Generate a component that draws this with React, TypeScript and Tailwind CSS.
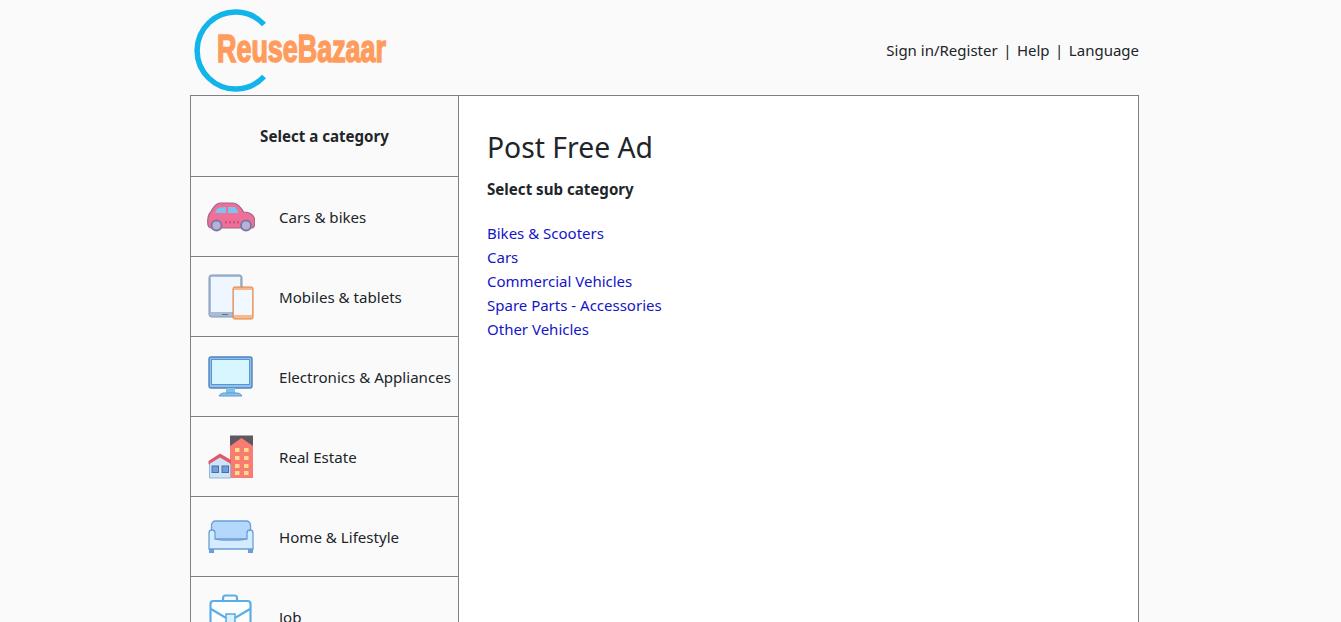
import { ReactNode } from 'react';

const CarIcon = () => (
  <svg width="48" height="30" viewBox="0 0 48 30">
    <path d="M0.700 20c0-5 1-8 3-10 3-6 6-9 10-9h12c4 0 8 4 11 9 6 0 11 3 11 9v3c0 3-2 4-4 4H4c-2 0-3.300-2-3.300-6z" fill="#f06f97" stroke="#a0678f" strokeWidth="1.200" />
    <path d="M8 11c1-3 2-5 5-5.500l6-.5v6z" fill="#7cc4f0" />
    <path d="M21 5h6c2 0 3.500 3 4.500 6H21z" fill="#7cc4f0" />
    <circle cx="9.500" cy="23.500" r="5" fill="#b6b3d6" stroke="#7d76a8" strokeWidth="2" />
    <circle cx="39" cy="23.500" r="5" fill="#b6b3d6" stroke="#7d76a8" strokeWidth="2" />
    <path d="M19 19v2.500M23 19v2.500M27 19v2.500M31 19v2.500" stroke="#a8476f" strokeWidth="1.200" />
  </svg>
);

const TabletIcon = () => (
  <svg width="46" height="46" viewBox="0 0 46 46">
    <rect x="1" y="1" width="33" height="42" rx="2.500" fill="#a9bcd6" stroke="#8197b5" />
    <rect x="3" y="3" width="29" height="35" fill="#eef7ff" />
    <path d="M14 40.500h6" stroke="#5f7390" strokeWidth="1" />
    <rect x="25" y="13" width="20" height="32" rx="1.500" fill="#fbb98a" stroke="#d9824d" />
    <rect x="26" y="16" width="18" height="25" fill="#f1f8ff" />
  </svg>
);

const MonitorIcon = () => (
  <svg width="46" height="41" viewBox="0 0 46 41">
    <rect x="1" y="1" width="43" height="31" rx="2" fill="#8fc0ee" stroke="#4f82bd" strokeWidth="1.400" />
    <rect x="3.500" y="3.500" width="38" height="25" fill="#d8f6ff" stroke="#5b95d1" />
    <rect x="18" y="32" width="9" height="5" fill="#7ec3e8" />
    <path d="M11 40c1-2 3-3 5-3h13c2 0 4 1 5 3z" fill="#8cc3ec" stroke="#5b95d1" />
  </svg>
);

const BuildingIcon = () => (
  <svg width="46" height="44" viewBox="0 0 46 44">
    <rect x="22" y="0.500" width="23" height="42.500" fill="#5f5860" />
    <path d="M22 11l11.500-8L45 11v32H22z" fill="#f97c72" />
    <g fill="#fddc8c">
      <rect x="27" y="13" width="4.500" height="4" /><rect x="36" y="13" width="4.500" height="4" />
      <rect x="27" y="21" width="4.500" height="4" /><rect x="36" y="21" width="4.500" height="4" />
      <rect x="27" y="29" width="4.500" height="4" /><rect x="36" y="29" width="4.500" height="4" />
      <rect x="27" y="36" width="4.500" height="4" /><rect x="36" y="36" width="4.500" height="4" />
    </g>
    <path d="M1.500 27l11-6 10 6v16h-21z" fill="#cfe3f8" stroke="#8fb3da" />
    <path d="M0.500 26l11.500-7.500L23 25v4l-11-6.500-11.500 7z" fill="#dd5b68" />
    <rect x="4" y="31" width="6.500" height="6.500" fill="#6c9fdb" stroke="#4a6f9f" />
    <rect x="14" y="31" width="6.500" height="6.500" fill="#6c9fdb" stroke="#4a6f9f" />
  </svg>
);

const SofaIcon = () => (
  <svg width="46" height="34" viewBox="0 0 46 34">
    <path d="M3.500 12V5c0-2 2-4 4-4h31c2 0 4 2 4 4v7l-2 7H6z" fill="#b4d8fb" stroke="#6a9fd6" strokeWidth="1.300" />
    <path d="M1 13c0-2 1.500-3 3-3s3 1 3 3v6c10 1.500 22 1.500 32 0v-6c0-2 1.500-3 3-3s3 1 3 3v16H1z" fill="#d5ebfe" stroke="#6a9fd6" strokeWidth="1.300" />
    <rect x="1" y="29" width="5" height="4" fill="#6a9fd6" />
    <rect x="40" y="29" width="5" height="4" fill="#6a9fd6" />
  </svg>
);

const JobIcon = () => (
  <svg width="46" height="46" viewBox="0 0 46 46">
    <path d="M15 8V4c0-1.500 1-2.500 2.500-2.500h9C28 1.500 29 2.500 29 4v4" fill="none" stroke="#5aaee8" strokeWidth="2.200" />
    <rect x="2.500" y="7" width="40" height="33" rx="3" fill="#fdfeff" stroke="#5aaee8" strokeWidth="2.200" />
    <path d="M3 15l15 9h9l15-9" fill="none" stroke="#5aaee8" strokeWidth="2.200" />
    <rect x="18" y="20" width="9" height="12" fill="#dff0fc" stroke="#5aaee8" strokeWidth="1.600" />
  </svg>
);

const CATEGORIES: { label: string; icon: ReactNode }[] = [
  { label: 'Cars & bikes', icon: <CarIcon /> },
  { label: 'Mobiles & tablets', icon: <TabletIcon /> },
  { label: 'Electronics & Appliances', icon: <MonitorIcon /> },
  { label: 'Real Estate', icon: <BuildingIcon /> },
  { label: 'Home & Lifestyle', icon: <SofaIcon /> },
  { label: 'Job', icon: <JobIcon /> },
];

const SUB_CATEGORIES = ['Bikes & Scooters', 'Cars', 'Commercial Vehicles', 'Spare Parts - Accessories', 'Other Vehicles'];

const Logo = () => (
  <div className="relative h-[83px] w-[200px]">
    <svg width="84" height="83" viewBox="0 0 84 83" className="absolute left-0 top-0">
      <path d="M74 15.500A38.500 38.500 0 1 0 74 67.500" fill="none" stroke="#12b5ea" strokeWidth="5.500" />
    </svg>
    <span className="absolute left-[27px] top-[17px] origin-left scale-x-[0.69] whitespace-nowrap font-['Liberation_Sans',sans-serif] text-[39px] leading-[46px] font-bold text-[#ff9c5d] [-webkit-text-stroke:1.600px_#ff9c5d]">
      ReuseBazaar
    </span>
  </div>
);

export default function App() {
  return (
    <div className="h-[622px] overflow-hidden bg-[#fafafa] font-['Noto_Sans',sans-serif] text-[15.1px] text-[#212529]">
      <div className="ml-[190px] w-[949px]">
        <header className="flex h-[95px] items-start justify-between pt-[9px]">
          <Logo />
          <div className="mt-[29px] flex gap-[5.500px] text-[15px] leading-6">
            <span>Sign in/Register</span>
            <span>|</span>
            <span>Help</span>
            <span>|</span>
            <span>Language</span>
          </div>
        </header>
        <div className="flex h-[527px] border border-b-0 border-[#808080]">
          <aside className="w-[268px] shrink-0 border-r border-[#808080]">
            <div className="flex h-[81px] items-center justify-center border-b border-[#808080] font-bold">
              Select a category
            </div>
            {CATEGORIES.map((category) => (
              <div key={category.label} className="flex h-[80px] items-center border-b border-[#808080]">
                <div className="flex w-[88px] shrink-0 justify-center pr-[8px]">{category.icon}</div>
                <span className="whitespace-nowrap pt-[2px]">{category.label}</span>
              </div>
            ))}
          </aside>
          <main className="flex-1 bg-white pl-[28px] pt-[30px]">
            <h1 className="text-[28.300px] leading-[42px] font-normal">Post Free Ad</h1>
            <p className="mt-[9px] leading-6 font-bold">Select sub category</p>
            <ul className="mt-[20px] text-[15px]">
              {SUB_CATEGORIES.map((name) => (
                <li key={name} className="leading-6 text-[#1414c8]">
                  {name}
                </li>
              ))}
            </ul>
          </main>
        </div>
      </div>
    </div>
  );
}
